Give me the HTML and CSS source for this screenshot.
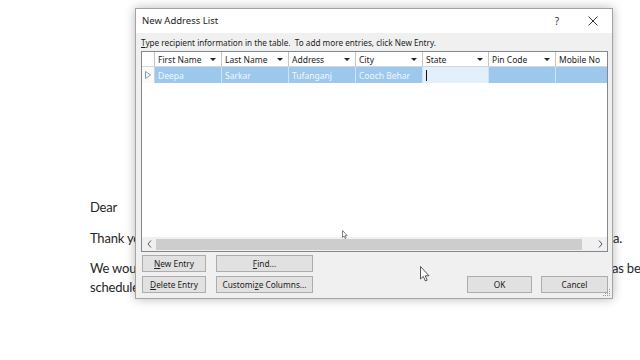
FILE: index.html
```html
<!DOCTYPE html>
<html lang="en">
<head>
    <meta charset="UTF-8">
    <meta name="viewport" content="width=device-width, initial-scale=1.0">
    <title>Mail Merge - New Address List</title>
    <link rel="stylesheet" href="styles.css">
</head>
<body>
    <div class="page">
        <div class="edge"></div>
        <div class="doc">
            <p class="doc-para greeting">Dear</p>
            <p class="doc-para doc-line"><span class="run">Thank you</span><span class="tail tail-a">a.</span></p>
            <p class="doc-para">
                <span class="doc-line"><span class="run">We would</span><span class="tail tail-b">as be</span></span>
                <span class="doc-line"><span class="run">scheduled</span></span>
            </p>
        </div>
    </div>

    <div class="dialog">
        <div class="titlebar">
            <span class="title">New Address List</span>
            <span class="help">?</span>
            <span class="close">
                <svg width="10" height="10" viewBox="0 0 10 10"><path d="M0.5 0.5 L9.5 9.5 M9.5 0.5 L0.5 9.5" stroke="#333" stroke-width="1" fill="none"/></svg>
            </span>
        </div>

        <div class="dialog-body">
            <div class="hint"><u>T</u>ype recipient information in the table.&nbsp; To add more entries, click New Entry.</div>

            <div class="grid-box">
                <div class="grid-head">
                    <div class="cell corner"></div>
                    <div class="cell head-cell"><span>First Name</span><i class="drop"></i></div>
                    <div class="cell head-cell"><span>Last Name</span><i class="drop"></i></div>
                    <div class="cell head-cell"><span>Address</span><i class="drop"></i></div>
                    <div class="cell head-cell"><span>City</span><i class="drop"></i></div>
                    <div class="cell head-cell"><span>State</span><i class="drop"></i></div>
                    <div class="cell head-cell"><span>Pin Code</span><i class="drop"></i></div>
                    <div class="cell head-cell last"><span>Mobile No</span></div>
                </div>
                <div class="grid-row">
                    <div class="cell row-marker">
                        <svg width="6" height="8" viewBox="0 0 6 8"><path d="M0.5 0.5 L5.5 4 L0.5 7.5 Z" fill="none" stroke="#8a9bb0" stroke-width="1"/></svg>
                    </div>
                    <div class="cell data-cell">Deepa</div>
                    <div class="cell data-cell">Sarkar</div>
                    <div class="cell data-cell">Tufanganj</div>
                    <div class="cell data-cell">Cooch Behar</div>
                    <div class="cell data-cell editing"><span class="caret"></span></div>
                    <div class="cell data-cell"></div>
                    <div class="cell data-cell last"></div>
                </div>
                <div class="grid-empty"></div>
                <div class="hscroll">
                    <span class="arrow">
                        <svg width="5" height="8" viewBox="0 0 5 8"><path d="M4 0.5 L1 4 L4 7.5" fill="none" stroke="#555" stroke-width="1"/></svg>
                    </span>
                    <div class="track"><div class="thumb"></div></div>
                    <span class="arrow">
                        <svg width="5" height="8" viewBox="0 0 5 8"><path d="M1 0.5 L4 4 L1 7.5" fill="none" stroke="#555" stroke-width="1"/></svg>
                    </span>
                </div>
            </div>

            <div class="actions">
                <div class="left-buttons">
                    <button class="btn"><u>N</u>ew Entry</button>
                    <button class="btn"><u>F</u>ind...</button>
                    <button class="btn"><u>D</u>elete Entry</button>
                    <button class="btn">Customi<u>z</u>e Columns...</button>
                </div>
                <div class="right-buttons">
                    <button class="btn btn-ok">OK</button>
                    <button class="btn btn-cancel">Cancel</button>
                </div>
            </div>
        </div>

        <svg class="grip" width="8" height="8" viewBox="0 0 8 8">
            <rect x="6" y="0" width="1" height="1" fill="#999"/>
            <rect x="4" y="2" width="1" height="1" fill="#999"/>
            <rect x="6" y="2" width="1" height="1" fill="#999"/>
            <rect x="2" y="4" width="1" height="1" fill="#999"/>
            <rect x="4" y="4" width="1" height="1" fill="#999"/>
            <rect x="6" y="4" width="1" height="1" fill="#999"/>
            <rect x="0" y="6" width="1" height="1" fill="#999"/>
            <rect x="2" y="6" width="1" height="1" fill="#999"/>
            <rect x="4" y="6" width="1" height="1" fill="#999"/>
            <rect x="6" y="6" width="1" height="1" fill="#999"/>
        </svg>
    </div>

    <!-- mouse pointers -->
    <svg class="pointer pointer-small" width="6" height="9" viewBox="0 0 6 9"><path d="M0.5 0.5 L0.5 7.5 L2 6 L3.2 8.5 L4.2 8 L3 5.6 L5.3 5.6 Z" fill="#fff" stroke="#666" stroke-width="0.8"/></svg>
    <svg class="pointer pointer-big" width="11" height="16" viewBox="0 0 11 16"><path d="M0.5 0.5 L0.5 13 L3.3 10.4 L5.4 15 L7.2 14.2 L5.2 9.8 L9 9.8 Z" fill="#fff" stroke="#555" stroke-width="1"/></svg>
</body>
</html>
```

FILE: styles.css
```css
html, body {
    margin: 0;
    height: 100%;
}
body {
    position: relative;
    overflow: hidden;
    background-color: #fff;
    width: 640px;
    height: 360px;
}
.page {
    display: flex;
    height: 360px;
}
.edge {
    width: 2px;
    margin-left: 1px;
    background-color: #7d8cab;
}
.doc {
    padding: 198px 0 0 89px;
    font-family: Lato, "Open Sans", sans-serif;
    font-size: 13px;
    letter-spacing: -0.2px;
    color: #262626;
    white-space: nowrap;
}
.doc-para {
    margin: 0 0 11px;
    line-height: 19px;
}
.doc-para.greeting {
    margin-bottom: 12px;
}
.doc-line {
    display: flex;
}
/* the rest of each line sits under the dialog */
.run {
    width: 45px;
}
.tail-a {
    margin-left: 478px;
}
.tail-b {
    margin-left: 477px;
}

/* dialog */
.dialog {
    position: absolute;
    left: 135px;
    top: 8px;
    width: 476px;
    border: 1px solid #a3a3a3;
    background-color: #f0f0f0;
    box-shadow: 0 0 10px rgba(0,0,0,0.28);
    font-family: "Noto Sans", "Open Sans", sans-serif;
    color: #1e1e1e;
}
.titlebar {
    display: flex;
    align-items: center;
    height: 23px;
    padding-bottom: 1px;
    background-color: #fff;
}
.title {
    flex: 1;
    padding-left: 6px;
    font-size: 9.5px;
}
.help {
    width: 34px;
    text-align: center;
    font-size: 10px;
    color: #333;
}
.close {
    width: 38px;
    display: flex;
    justify-content: center;
}
.dialog-body {
    padding: 4px 4px 5px 5px;
}
.hint {
    height: 14px;
    line-height: 12px;
    font-size: 8.2px;
    white-space: nowrap;
}

/* grid */
.grid-box {
    display: flex;
    flex-direction: column;
    height: 201px;
    box-sizing: border-box;
    border: 1px solid #828790;
    background-color: #fff;
    font-size: 8.5px;
}
.grid-head,
.grid-row {
    display: grid;
    grid-template-columns: 13px 67px 67px 67px 67px 66px 67px 1fr;
    height: 16px;
    box-sizing: border-box;
}
.grid-head {
    height: 15px;
    border-bottom: 1px solid #d6d6d6;
}
.cell {
    display: flex;
    align-items: center;
    box-sizing: border-box;
    border-right: 1px solid #c4c4c4;
    white-space: nowrap;
    overflow: hidden;
}
.cell.last {
    border-right: none;
}
.head-cell {
    justify-content: space-between;
    padding: 0 5px 0 3px;
    color: #222;
}
.drop {
    width: 0;
    height: 0;
    border-left: 3px solid transparent;
    border-right: 3px solid transparent;
    border-top: 3px solid #222;
}
.row-marker {
    justify-content: center;
    background-color: #fafafa;
    border-right-color: #d0d0d0;
}
.data-cell {
    padding-left: 3px;
    background-color: #9cc8ee;
    color: #f2f7fc;
    border-right: 1px solid #cfe3f5;
}
.data-cell.editing {
    background-color: #e3f0fb;
}
.caret {
    width: 1px;
    height: 11px;
    background-color: #111;
}
.grid-empty {
    flex: 1;
}
.hscroll {
    display: flex;
    align-items: center;
    height: 14px;
    background-color: #f0f0f0;
}
.arrow {
    width: 14px;
    display: flex;
    justify-content: center;
}
.track {
    flex: 1;
    height: 100%;
    display: flex;
    align-items: center;
    padding-right: 11px;
}
.thumb {
    flex: 1;
    height: 11px;
    background-color: #cdcdcd;
}

/* buttons */
.actions {
    display: flex;
    justify-content: space-between;
    align-items: flex-end;
    margin-top: 3px;
}
.left-buttons {
    display: grid;
    grid-template-columns: 64px 97px;
    grid-auto-rows: 17px;
    column-gap: 10px;
    row-gap: 4px;
    margin-left: 1px;
}
.right-buttons {
    display: flex;
    gap: 9px;
}
.btn {
    height: 17px;
    padding: 0;
    border: 1px solid #adadad;
    background-color: #e1e1e1;
    font-family: "Noto Sans", "Open Sans", sans-serif;
    font-size: 8.3px;
    color: #222;
}
.btn-ok {
    width: 65px;
}
.btn-cancel {
    width: 67px;
}
.grip {
    position: absolute;
    right: 1px;
    bottom: 1px;
}

.pointer {
    position: absolute;
}
.pointer-small {
    left: 342px;
    top: 230px;
}
.pointer-big {
    left: 420px;
    top: 266px;
}
```
